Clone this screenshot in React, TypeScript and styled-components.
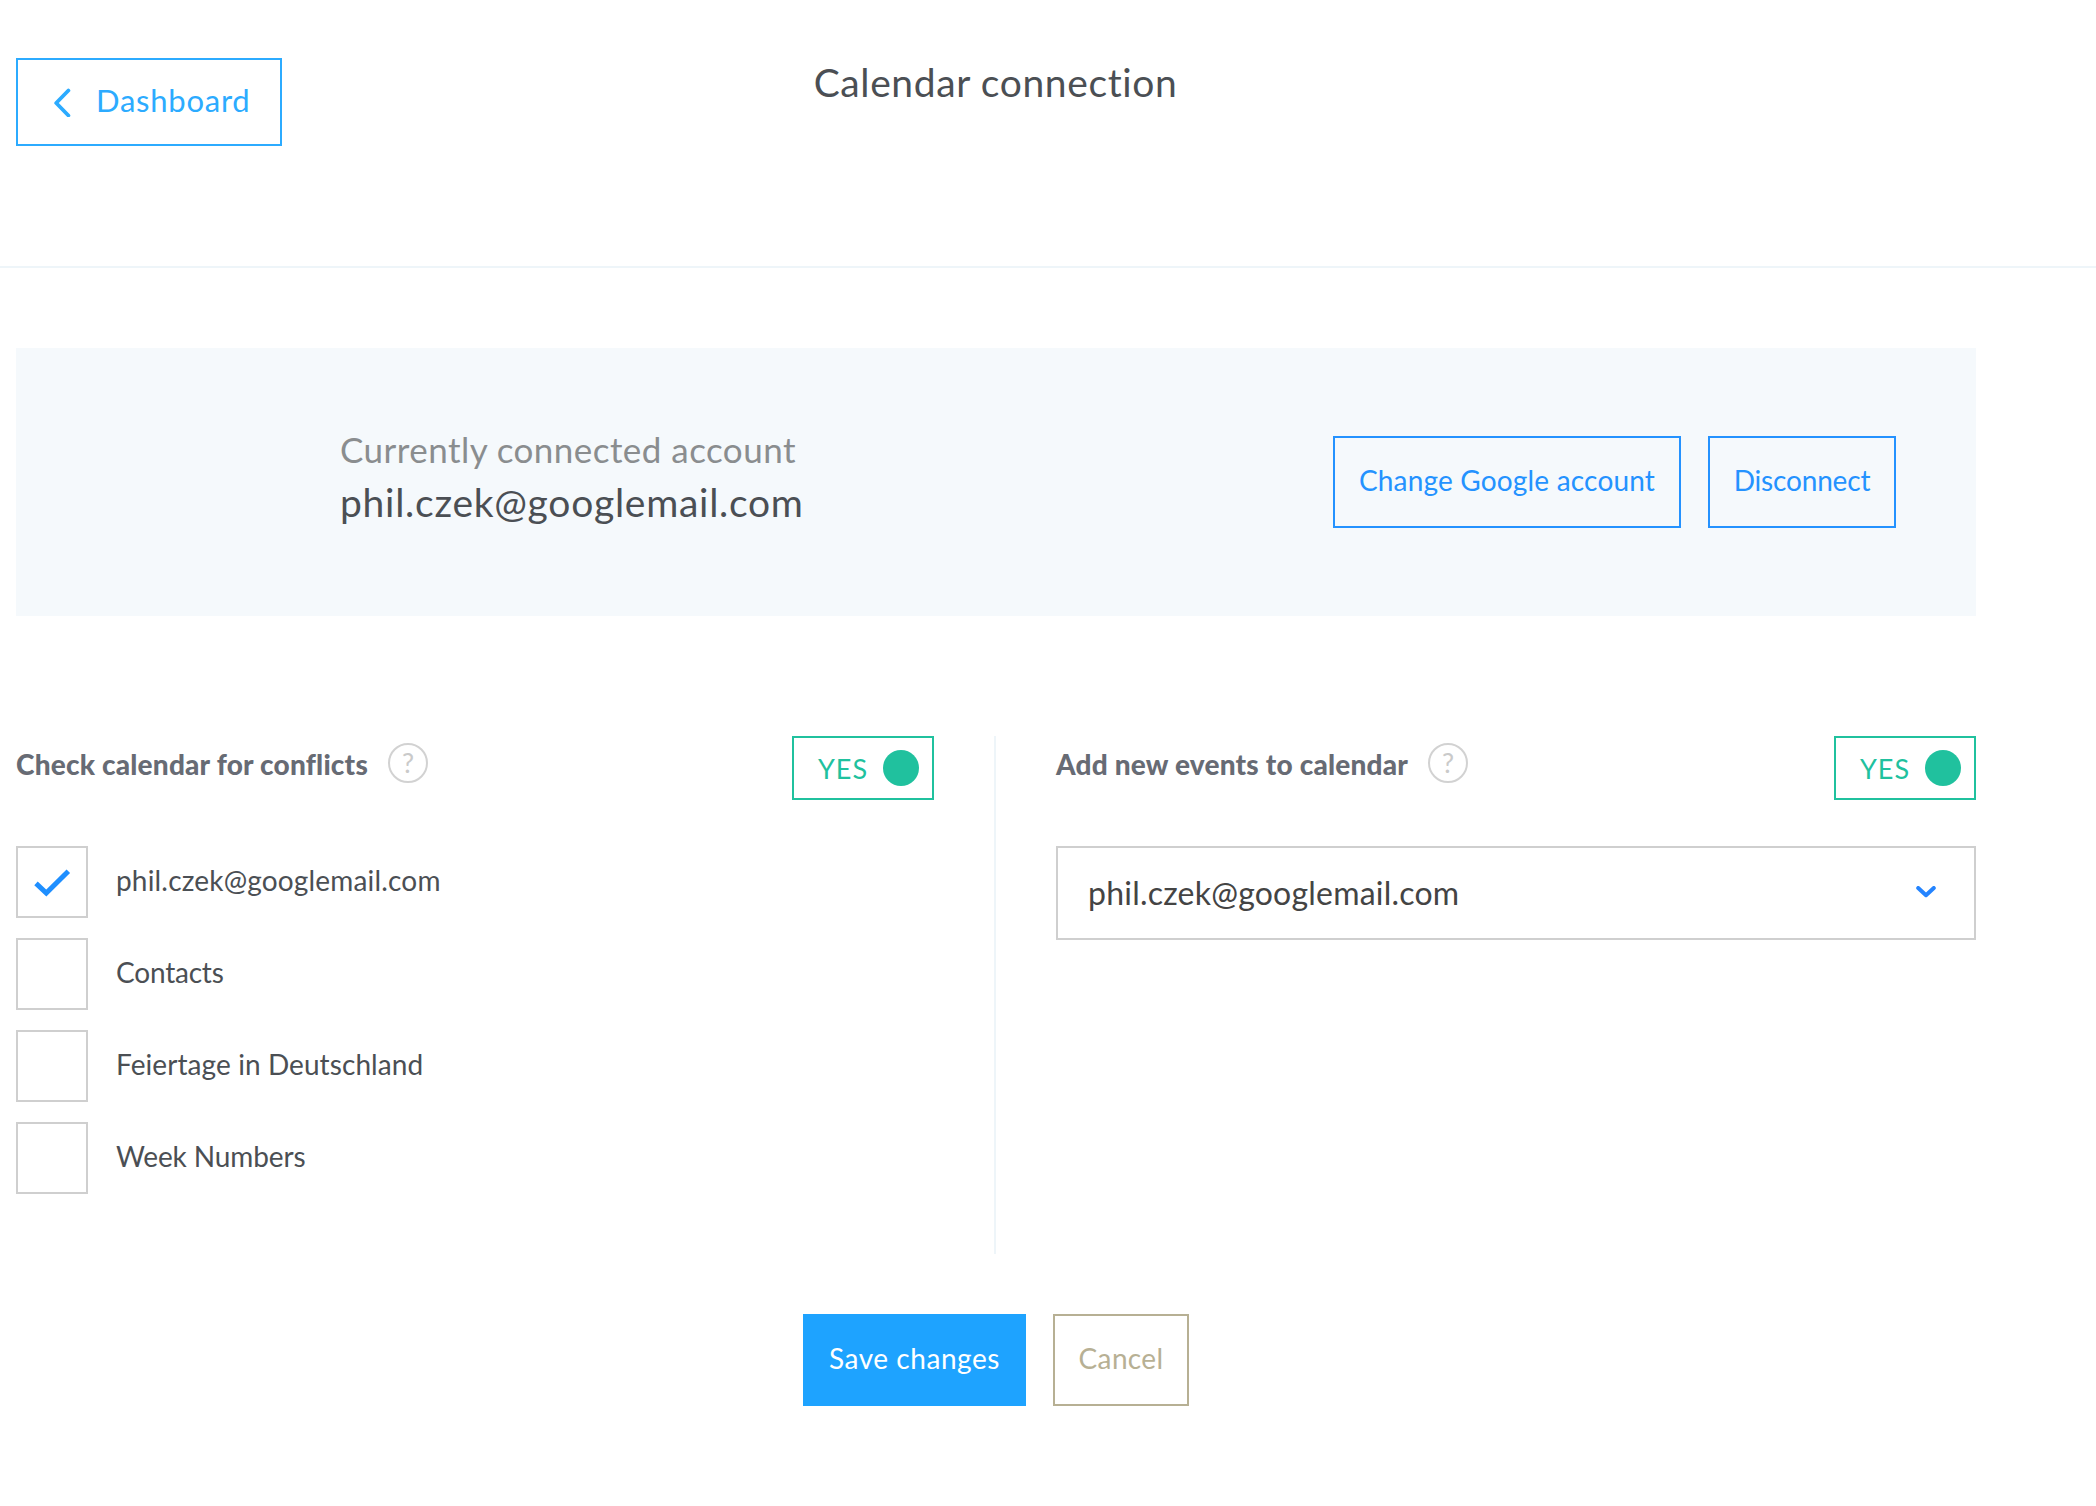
import React, { useState } from "react";
import styled, { createGlobalStyle } from "styled-components";

const GlobalStyle = createGlobalStyle`
  *, *::before, *::after { box-sizing: border-box; }
  body {
    margin: 0;
    background: #fff;
    color: #4b4f54;
    font-family: Lato, "Open Sans", sans-serif;
  }
  button { font-family: inherit; cursor: pointer; }
`;

const Page = styled.div`
  min-height: 1506px;
  overflow-x: hidden;
`;

const Header = styled.header`
  display: grid;
  grid-template-columns: 1fr auto 1fr;
  align-items: start;
  height: 268px;
  padding: 58px 121px 0 16px;
  border-bottom: 2px solid #eef5f9;
`;

const BackButton = styled.button`
  display: flex;
  align-items: center;
  gap: 24px;
  width: 266px;
  height: 88px;
  padding: 0 0 0 36px;
  border: 2px solid #2cabff;
  background: transparent;
  color: #2cabff;
`;

const BackLabel = styled.span`
  padding-bottom: 4px;
  font-size: 31px;
  line-height: 40px;
  letter-spacing: 0.75px;
`;

const Title = styled.h1`
  margin: 0;
  font-size: 39px;
  font-weight: 400;
  line-height: 48px;
  letter-spacing: 0.62px;
  color: #4b4f54;
`;

const Main = styled.main`
  width: 1960px;
  margin: 80px 0 0 16px;
`;

const AccountPanel = styled.section`
  display: flex;
  justify-content: space-between;
  align-items: flex-start;
  height: 268px;
  padding: 75px 80px 0 324px;
  background: #f5f9fc;
`;

const AccountCaption = styled.p`
  margin: 0;
  font-size: 35px;
  line-height: 53px;
  letter-spacing: 0.46px;
  color: #8a8d8f;
`;

const AccountEmail = styled.p`
  margin: 0;
  font-size: 39px;
  line-height: 53px;
  letter-spacing: 0.73px;
`;

const ButtonRow = styled.div<{ $top: number }>`
  display: flex;
  justify-content: center;
  gap: 27px;
  margin-top: ${(p) => p.$top}px;
`;

const tones = {
  outline: { border: "#2492ff", fill: "transparent", text: "#2492ff" },
  primary: { border: "#1ea3ff", fill: "#1ea3ff", text: "#fff" },
  muted: { border: "#b7b094", fill: "transparent", text: "#b7b094" },
};

const Button = styled.button<{ $tone: keyof typeof tones; $width: number; $tracking: number }>`
  width: ${(p) => p.$width}px;
  height: 92px;
  padding: 0 0 4px;
  border: 2px solid ${(p) => tones[p.$tone].border};
  background: ${(p) => tones[p.$tone].fill};
  color: ${(p) => tones[p.$tone].text};
  font-size: 28px;
  letter-spacing: ${(p) => p.$tracking}px;
  white-space: nowrap;
`;

const Columns = styled.div`
  display: grid;
  grid-template-columns: 918px 2px 920px;
  gap: 60px;
  height: 518px;
  margin-top: 120px;
`;

const Divider = styled.div`
  background: #eef5f9;
`;

const ColumnHead = styled.div`
  display: flex;
  justify-content: space-between;
  align-items: flex-start;
  height: 64px;
  margin-bottom: 46px;
`;

const HeadingGroup = styled.div`
  display: flex;
  align-items: flex-start;
  gap: 20px;
  margin-top: 7px;
`;

const Heading = styled.h2`
  margin: 1px 0 0;
  font-size: 28px;
  font-weight: 900;
  line-height: 40px;
  letter-spacing: 0.2px;
  color: #676b74;
`;

const Help = styled.span`
  display: flex;
  align-items: center;
  justify-content: center;
  width: 40px;
  height: 40px;
  border: 2px solid #d2d2d2;
  border-radius: 50%;
  color: #cacaca;
  font-size: 27px;
  line-height: 36px;
`;

const ToggleButton = styled.button`
  display: flex;
  align-items: center;
  justify-content: space-between;
  width: 142px;
  height: 64px;
  padding: 0 13px 0 24px;
  border: 2px solid #20c19e;
  background: transparent;
  color: #20c19e;
  font-size: 27px;
  letter-spacing: 1px;
`;

const Knob = styled.span`
  width: 36px;
  height: 36px;
  border-radius: 50%;
  background: #20c19e;
`;

const CalendarList = styled.div`
  display: flex;
  flex-direction: column;
  gap: 20px;
`;

const CalendarRow = styled.div`
  display: flex;
  align-items: center;
  gap: 28px;
  cursor: pointer;
`;

const Box = styled.span`
  display: flex;
  align-items: center;
  justify-content: center;
  width: 72px;
  height: 72px;
  border: 2px solid #cfcfcf;
`;

const CalendarName = styled.span<{ $tracking: number }>`
  padding-bottom: 4px;
  font-size: 28px;
  letter-spacing: ${(p) => p.$tracking}px;
`;

const Select = styled.div`
  display: flex;
  align-items: center;
  justify-content: space-between;
  height: 94px;
  padding: 0 38px 0 30px;
  border: 2px solid #cfcfcf;
`;

const SelectValue = styled.span`
  padding-bottom: 1px;
  font-size: 32px;
  letter-spacing: 0.22px;
  color: #444;
`;

const Chevron = styled.svg`
  display: block;
  margin-bottom: 3px;
`;

function Toggle() {
  return (
    <ToggleButton>
      YES
      <Knob />
    </ToggleButton>
  );
}

function SectionHead({ title }: { title: string }) {
  return (
    <ColumnHead>
      <HeadingGroup>
        <Heading>{title}</Heading>
        <Help>?</Help>
      </HeadingGroup>
      <Toggle />
    </ColumnHead>
  );
}

const calendars = [
  { name: "phil.czek@googlemail.com", tracking: 0.18 },
  { name: "Contacts", tracking: -0.2 },
  { name: "Feiertage in Deutschland", tracking: 0.08 },
  { name: "Week Numbers", tracking: -0.12 },
];

export default function App() {
  const [checked, setChecked] = useState([true, false, false, false]);
  const flip = (i: number) => setChecked(checked.map((c, j) => (j === i ? !c : c)));

  return (
    <Page>
      <GlobalStyle />
      <Header>
        <BackButton>
          <svg width="18" height="30" viewBox="0 0 18 30" fill="none" stroke="currentColor" strokeWidth="3.8" strokeLinecap="round" strokeLinejoin="round">
            <path d="M14.4 3.5 2.2 16l12.2 12.5" />
          </svg>
          <BackLabel>Dashboard</BackLabel>
        </BackButton>
        <Title>Calendar connection</Title>
      </Header>

      <Main>
        <AccountPanel>
          <div>
            <AccountCaption>Currently connected account</AccountCaption>
            <AccountEmail>phil.czek@googlemail.com</AccountEmail>
          </div>
          <ButtonRow $top={13}>
            <Button $tone="outline" $width={348} $tracking={0.18}>Change Google account</Button>
            <Button $tone="outline" $width={188} $tracking={-0.18}>Disconnect</Button>
          </ButtonRow>
        </AccountPanel>

        <Columns>
          <section>
            <SectionHead title="Check calendar for conflicts" />
            <CalendarList>
              {calendars.map((c, i) => (
                <CalendarRow key={c.name} onClick={() => flip(i)}>
                  <Box>
                    {checked[i] && (
                      <svg width="38" height="30" viewBox="0 0 38 30" fill="none" stroke="#1f8fff" strokeWidth="5">
                        <path d="M3 16.4 13.3 26.1 35.3 4.3" />
                      </svg>
                    )}
                  </Box>
                  <CalendarName $tracking={c.tracking}>{c.name}</CalendarName>
                </CalendarRow>
              ))}
            </CalendarList>
          </section>
          <Divider />
          <section>
            <SectionHead title="Add new events to calendar" />
            <Select>
              <SelectValue>phil.czek@googlemail.com</SelectValue>
              <Chevron width="20" height="12" viewBox="0 0 20 12" fill="none" stroke="#2484ff" strokeWidth="4" strokeLinecap="round" strokeLinejoin="round">
                <path d="M2.2 2 10 9.2l7.8-7.2" />
              </Chevron>
            </Select>
          </section>
        </Columns>

        <ButtonRow $top={60}>
          <Button $tone="primary" $width={223} $tracking={0.55}>Save changes</Button>
          <Button $tone="muted" $width={136} $tracking={0.35}>Cancel</Button>
        </ButtonRow>
      </Main>
    </Page>
  );
}
